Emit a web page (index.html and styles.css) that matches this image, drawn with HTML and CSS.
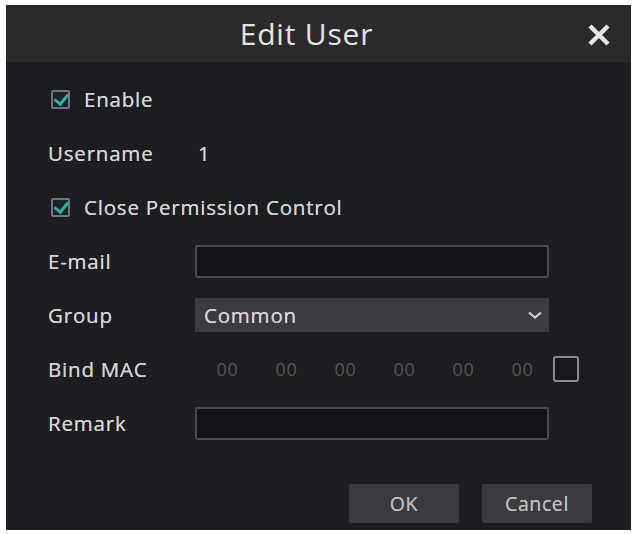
FILE: index.html
```html
<!DOCTYPE html>
<html lang="en">
<head>
  <meta charset="UTF-8">
  <title>Edit User</title>
  <link rel="stylesheet" href="styles.css">
</head>
<body>
  <div class="dialog">
    <header class="title-bar">
      <h1>Edit User</h1>
      <button class="close" title="Close">
        <svg width="24" height="24" viewBox="0 0 24 24">
          <path d="M3 3 L21 21 M21 3 L3 21" stroke="#e6e6e6" stroke-width="4.5" stroke-linecap="butt"/>
        </svg>
      </button>
    </header>

    <div class="form">
      <label class="row check-row">
        <span class="check on"></span>
        <span>Enable</span>
      </label>

      <div class="row">
        <span class="label">Username</span>
        <span class="value">1</span>
      </div>

      <label class="row check-row">
        <span class="check on"></span>
        <span>Close Permission Control</span>
      </label>

      <div class="row">
        <span class="label">E-mail</span>
        <input type="text" class="field">
      </div>

      <div class="row">
        <span class="label">Group</span>
        <div class="select">
          <span>Common</span>
          <svg width="16" height="10" viewBox="0 0 16 10">
            <path d="M2 2.5 L8 7.5 L14 2.5" stroke="#d0d0d0" stroke-width="2.2" fill="none"/>
          </svg>
        </div>
      </div>

      <div class="row">
        <span class="label">Bind MAC</span>
        <div class="mac">
          <span>00</span><span>00</span><span>00</span><span>00</span><span>00</span><span>00</span>
        </div>
        <span class="box"></span>
      </div>

      <div class="row">
        <span class="label">Remark</span>
        <input type="text" class="field">
      </div>
    </div>

    <footer class="buttons">
      <button class="btn">OK</button>
      <button class="btn">Cancel</button>
    </footer>
  </div>
</body>
</html>
```

FILE: styles.css
```css
body {
  margin: 0;
  background: #fff;
  font-family: "Open Sans", "Noto Sans", sans-serif;
}
.dialog {
  margin: 5px 0 0 6px;
  width: 625px;
  height: 525px;
  background: #1c1d20;
  display: flex;
  flex-direction: column;
}
.title-bar {
  height: 57px;
  background: #2a2a2b;
  display: flex;
  align-items: center;
  justify-content: center;
  position: relative;
}
.title-bar h1 {
  margin: 0;
  font-size: 30px;
  font-weight: 400;
  color: #e4e4e4;
  letter-spacing: 0.8px;
  padding-right: 24px;
}
.close {
  position: absolute;
  right: 20px;
  top: 18px;
  background: none;
  border: none;
  padding: 0;
  width: 24px;
  height: 24px;
}
.form {
  padding: 20px 0 0 42px;
  display: flex;
  flex-direction: column;
  gap: 20px;
}
.row {
  height: 34px;
  display: flex;
  align-items: center;
  font-size: 20.5px;
  color: #d4d4d4;
  letter-spacing: 0.8px;
  text-shadow: 0 0 0.6px #d4d4d4;
}
.label {
  width: 147px;
  flex: none;
}
.value {
  margin-left: 3px;
}
/* ticked checkbox in front of a caption */
.check {
  width: 15px;
  height: 15px;
  border: 2px solid #76737d;
  border-radius: 2px;
  background: #182530;
  margin: 0 14px 0 3px;
  position: relative;
  flex: none;
}
.check.on::after {
  content: "";
  position: absolute;
  left: 4px;
  top: -1px;
  width: 6px;
  height: 11px;
  border: solid #3aa99c;
  border-width: 0 3px 3px 0;
  transform: rotate(40deg);
}
.field {
  width: 354px;
  height: 33px;
  box-sizing: border-box;
  background: #121316;
  border: 2px solid #47494c;
  border-radius: 3px;
  margin: 0;
}
.select {
  width: 354px;
  height: 34px;
  box-sizing: border-box;
  background: #3b3c3f;
  display: flex;
  align-items: center;
  justify-content: space-between;
  padding: 0 6px 0 9px;
  color: #d6d6d6;
}
.mac {
  width: 354px;
  display: flex;
  padding-left: 3px;
}
.mac span {
  width: 59px;
  text-align: center;
  color: #55575a;
  font-size: 18px;
  text-shadow: none;
}
.box {
  width: 22px;
  height: 22px;
  background: #16171a;
  border: 2px solid #8a8c8f;
  border-radius: 3px;
  margin-left: 1px;
  flex: none;
}
.buttons {
  margin-top: auto;
  padding: 0 39px 7px 0;
  display: flex;
  justify-content: flex-end;
  gap: 23px;
}
.btn {
  width: 110px;
  height: 39px;
  background: #3a3b3e;
  border: none;
  border-radius: 2px;
  color: #bdbdbd;
  font-family: "Open Sans", "Noto Sans", sans-serif;
  font-size: 19.5px;
  letter-spacing: 0.6px;
  text-shadow: 0 0 0.6px #bdbdbd;
}
```
